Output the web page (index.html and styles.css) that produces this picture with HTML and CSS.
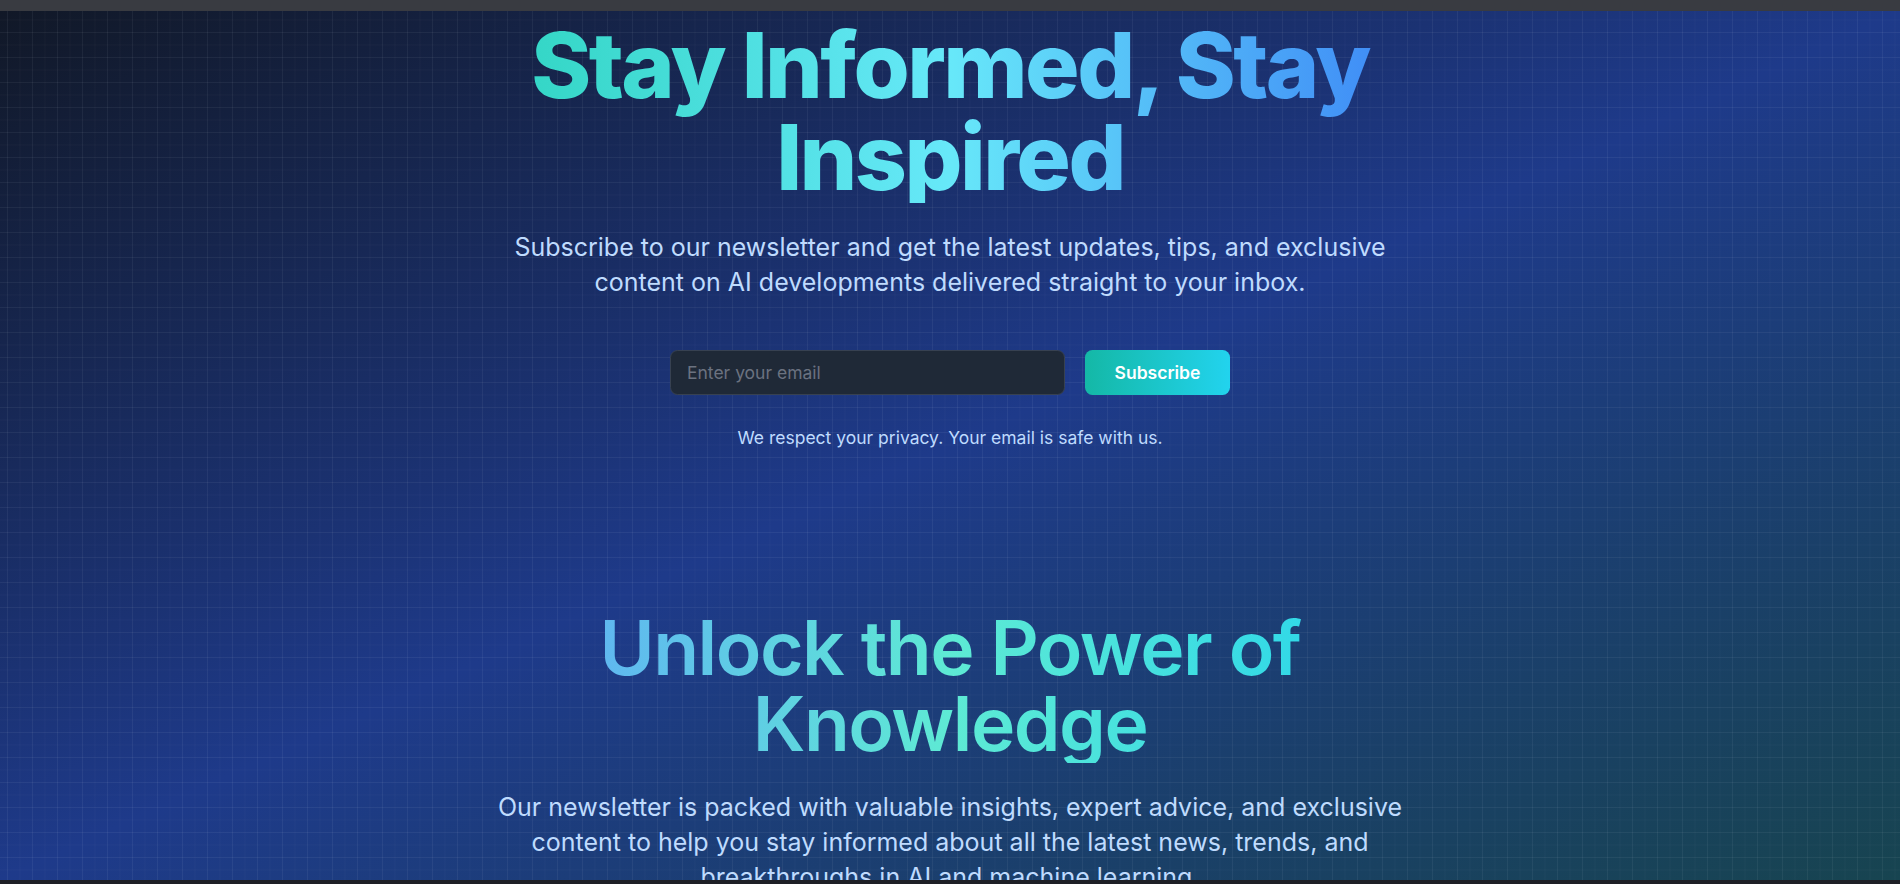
FILE: index.html
```html
<!DOCTYPE html>
<html lang="en">
<head>
<meta charset="utf-8">
<title>Stay Informed, Stay Inspired</title>
<link rel="stylesheet" href="styles.css">
</head>
<body>
  <div class="chrome"></div>
  <main class="page">
    <section class="hero">
      <h1 class="hero-title">Stay Informed, Stay Inspired</h1>
      <p class="lead">Subscribe to our newsletter and get the latest updates, tips, and exclusive content on AI developments delivered straight to your inbox.</p>
      <form class="signup" onsubmit="return false;">
        <input class="signup-input" type="email" placeholder="Enter your email">
        <button class="signup-button" type="submit">Subscribe</button>
      </form>
      <p class="privacy">We respect your privacy. Your email is safe with us.</p>
    </section>
    <section class="knowledge">
      <h2 class="knowledge-title">Unlock the Power of Knowledge</h2>
      <p class="lead">Our newsletter is packed with valuable insights, expert advice, and exclusive content to help you stay informed about all the latest news, trends, and breakthroughs in AI and machine learning.</p>
    </section>
  </main>
  <div class="bottom-bar"></div>
</body>
</html>
```
FILE: styles.css
```css
* {
  box-sizing: border-box;
}

html,
body {
  margin: 0;
  height: 100%;
}

body {
  display: flex;
  flex-direction: column;
  overflow: hidden;
  font-family: Inter, "Noto Sans", "Liberation Sans", sans-serif;
  background: #1e2026;
}

.chrome {
  flex: 0 0 11px;
  background: #393b41;
}

.bottom-bar {
  flex: 0 0 4px;
  background: #1e2026;
}

.page {
  flex: 1 1 auto;
  overflow: hidden;
  display: flex;
  flex-direction: column;
  align-items: center;
  text-align: center;
  background-color: #1e3a8a;
  background-image:
    linear-gradient(rgba(255, 255, 255, 0.03) 1px, transparent 1px),
    linear-gradient(90deg, rgba(255, 255, 255, 0.03) 1px, transparent 1px),
    linear-gradient(rgba(255, 255, 255, 0.022) 1px, transparent 1px),
    linear-gradient(90deg, rgba(255, 255, 255, 0.022) 1px, transparent 1px),
    linear-gradient(to bottom right, #111827 0%, #1e3a8a 50%, #174450 100%);
  background-size: 25px 25px, 25px 25px, 12.5px 12.5px, 12.5px 12.5px, 100% 100%;
  background-position: 7px 21px, 7px 21px, 7px 8.5px, 7px 8.5px, 0 0;
}

.hero,
.knowledge {
  width: 960px;
  display: flex;
  flex-direction: column;
  align-items: center;
}

.hero {
  padding-top: 7.5px;
}

.knowledge {
  padding-top: 159.5px;
}

.hero-title {
  margin: 0 0 27.5px;
  width: 100%;
  font-size: 91px;
  line-height: 92px;
  font-weight: 800;
  letter-spacing: -0.028em;
  background: linear-gradient(to right, #2dd4bf, #67e8f9, #3b82f6);
  -webkit-background-clip: text;
  background-clip: text;
  color: transparent;
}

.knowledge-title {
  margin: 0 0 27.5px;
  width: 100%;
  font-size: 75px;
  line-height: 76.7px;
  font-weight: 600;
  letter-spacing: -0.02em;
  background: linear-gradient(to right, #60a5fa, #5eead4, #22d3ee);
  -webkit-background-clip: text;
  background-clip: text;
  color: transparent;
}

.lead {
  margin: 0;
  font-size: 25px;
  line-height: 35px;
  color: #bfdbfe;
}

.signup {
  margin-top: 50px;
  width: 560px;
  display: flex;
  gap: 20px;
}

.signup-input {
  flex: 1 1 auto;
  min-width: 0;
  height: 45px;
  padding: 0 16px;
  font-family: inherit;
  font-size: 17.5px;
  color: #e5e7eb;
  background: #1f2937;
  border: 1px solid #374151;
  border-radius: 7.5px;
  outline: none;
}

.signup-input::placeholder {
  color: #6b7280;
}

.signup-button {
  flex: 0 0 145px;
  height: 45px;
  font-family: inherit;
  font-size: 17.5px;
  font-weight: 600;
  color: #ffffff;
  background: linear-gradient(to right, #14b8a6, #22d3ee);
  border: 0;
  border-radius: 7.5px;
  cursor: pointer;
}

.privacy {
  margin: 30px 0 0;
  font-size: 17.5px;
  line-height: 25px;
  color: #bfdbfe;
}
```
